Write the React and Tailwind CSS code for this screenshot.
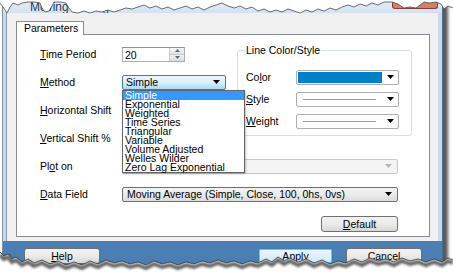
import React from "react"

const topTear = [
  [0, 3], [3, 7], [7, 13], [10, 7], [13, 3], [18, 5], [22, 3], [28, 2], [34, 2], [40, 3], [42, 8], [45, 12],
  [49, 11], [52, 6], [54, 2], [60, 2], [66, 3], [69, 8], [72, 12], [78, 13], [84, 11], [90, 13], [96, 11],
  [102, 12], [108, 10], [114, 12], [120, 10], [126, 8], [132, 9], [138, 7], [144, 5], [150, 8], [156, 6],
  [162, 9], [168, 7], [174, 10], [180, 8], [186, 6], [192, 9], [198, 7], [204, 10], [210, 7], [216, 5],
  [222, 3], [228, 6], [234, 8], [240, 6], [246, 9], [252, 7], [258, 11], [264, 9], [270, 12], [276, 10],
  [282, 12], [288, 9], [294, 11], [300, 13], [306, 10], [312, 12], [318, 9], [324, 11], [330, 8], [336, 10],
  [342, 7], [348, 5], [354, 7], [360, 4], [366, 6], [372, 3], [378, 5], [384, 2], [392, 2], [398, 4],
  [404, 8], [410, 7], [416, 8], [420, 5], [424, 2], [430, 3], [436, 2], [441, 4], [444, 9], [448, 6], [453, 8],
]

const bottomTear = [
  [0, 252], [4, 256], [8, 254], [12, 259], [16, 257], [22, 262], [28, 259], [34, 263], [42, 260], [50, 264],
  [58, 261], [66, 265], [74, 262], [82, 265], [90, 261], [98, 264], [106, 260], [114, 263], [122, 261],
  [130, 264], [138, 262], [146, 265], [154, 261], [162, 264], [170, 262], [178, 265], [186, 262], [194, 264],
  [202, 261], [210, 263], [218, 260], [226, 263], [234, 261], [242, 264], [250, 261], [258, 263], [266, 259],
  [272, 262], [278, 257], [284, 261], [290, 258], [298, 262], [306, 259], [314, 263], [322, 260], [330, 264],
  [338, 261], [346, 263], [354, 259], [362, 262], [370, 258], [378, 261], [386, 259], [394, 262], [402, 258],
  [410, 261], [418, 259], [426, 262], [434, 259], [442, 262], [448, 258], [453, 260],
]

const pts = (list, dy = 0) => list.map(([x, y]) => `${x},${y + dy}`).join(" ")

function Arrow({ color = "#000" }) {
  return (
    <svg width="7" height="4" viewBox="0 0 7 4">
      <path d="M0 0h7L3.5 4z" fill={color} />
    </svg>
  )
}

function Label({ children, width = "w-[82px]" }) {
  return <span className={`${width} shrink-0`}>{children}</span>
}

const methods = [
  "Simple",
  "Exponential",
  "Weighted",
  "Time Series",
  "Triangular",
  "Variable",
  "Volume Adjusted",
  "Welles Wilder",
  "Zero Lag Exponential",
]

export default function App() {
  return (
    <div className="relative w-[453px] h-[275px] overflow-hidden bg-white font-['Liberation_Sans',Arial,sans-serif] text-[10.5px] leading-none text-black">
      <div className="ml-[2px] w-[441px] h-full flex flex-col border-l border-[#7f93aa] border-r border-r-[#4f6d8c] bg-[#c9d9ea] shadow-[5px_1px_3px_rgba(0,0,0,0.65)]">
        {/* title bar */}
        <div className="h-[13px] flex items-start justify-between bg-gradient-to-b from-[#e6eef7] to-[#d2e1f1]">
          <span className="pl-[27px] pt-[1px] text-[12px] text-[#1e395b]">Moving Average</span>
          <span className="mr-[4px] w-[46px] h-[9px] bg-[#d47e6c] border border-t-0 border-[#8a3d32] rounded-b-[3px]" />
        </div>

        {/* dialog body */}
        <div className="ml-[3px] mr-[4px] h-[228px] flex flex-col bg-[#f0f0f0] border-l border-[#8797ab] pt-[8px] pl-[9px] pr-[8px] pb-[4px]">
          <div className="relative z-10 -mb-px w-[68px] h-[14px] flex items-center pl-[7px] bg-white border border-b-0 border-[#898c95]">
            Parameters
          </div>
          <div className="flex-1 flex flex-col bg-white border border-[#898c95]">
            <div className="flex">
              {/* left column */}
              <div className="w-[220px] pl-[23px] pt-[5px] flex flex-col">
                <div className="h-[28px] flex items-center">
                  <Label><u>T</u>ime Period</Label>
                  <div className="w-[63px] h-[15px] flex border border-[#abadb3] border-t-[#8e9199] bg-white">
                    <span className="flex-1 pl-[2px] pt-[2px]">20</span>
                    <div className="w-[15px] flex flex-col border-l border-[#c9c9c9]">
                      <span className="flex-1 flex items-center justify-center bg-gradient-to-b from-[#f6f6f6] to-[#e2e2e2] border-b border-[#c9c9c9]">
                        <svg width="5" height="3" viewBox="0 0 5 3"><path d="M0 3h5L2.5 0z" fill="#5b6d85" /></svg>
                      </span>
                      <span className="flex-1 flex items-center justify-center bg-gradient-to-b from-[#f0f0f0] to-[#dcdcdc]">
                        <svg width="5" height="3" viewBox="0 0 5 3"><path d="M0 0h5L2.5 3z" fill="#5b6d85" /></svg>
                      </span>
                    </div>
                  </div>
                </div>

                <div className="h-[28px] flex items-center">
                  <Label><u>M</u>ethod</Label>
                  <div className="relative">
                    <div className="w-[104px] h-[15px] flex items-center justify-between pl-[3px] pr-[5px] rounded-[2px] border border-[#3c7fb1] bg-gradient-to-b from-[#eaf6fd] via-[#d9f0fc] to-[#a7d9f5]">
                      <span>Simple</span>
                      <Arrow />
                    </div>
                    {/* open dropdown list */}
                    <div className="absolute left-0 top-full z-20 w-[123px] border border-[#646464] bg-white shadow-[1px_1px_2px_rgba(0,0,0,0.25)]">
                      {methods.map((m, i) => (
                        <div
                          key={m}
                          className={
                            i === 0
                              ? "h-[9px] leading-[9px] pl-[2px] bg-[#3399ff] text-white"
                              : "h-[9px] leading-[9px] pl-[2px]"
                          }
                        >
                          {m}
                        </div>
                      ))}
                    </div>
                  </div>
                </div>

                <div className="h-[28px] flex items-center">
                  <Label><u>H</u>orizontal Shift</Label>
                </div>
                <div className="h-[28px] flex items-center">
                  <Label><u>V</u>ertical Shift %</Label>
                </div>
              </div>

              {/* line color / style group */}
              <div className="relative mt-[15px] w-[175px] h-[86px] rounded-[3px] border border-[#d5dfe5] pt-[15px] pl-[8px] flex flex-col">
                <span className="absolute -top-[6px] left-[7px] bg-white px-[1px]">Line Color/Style</span>
                <div className="h-[22px] flex items-center">
                  <Label width="w-[50px]">Co<u>l</u>or</Label>
                  <div className="w-[103px] h-[15px] flex items-center justify-between pl-[1px] pr-[4px] rounded-[2px] border border-[#abadb3] bg-white">
                    <span className="w-[84px] h-[11px] bg-[#0080c8]" />
                    <Arrow />
                  </div>
                </div>
                <div className="h-[22px] flex items-center">
                  <Label width="w-[50px]"><u>S</u>tyle</Label>
                  <div className="w-[103px] h-[15px] flex items-center justify-between pl-[6px] pr-[4px] rounded-[2px] border border-[#abadb3] bg-white">
                    <span className="w-[73px] h-px bg-[#9a9a9a]" />
                    <Arrow />
                  </div>
                </div>
                <div className="h-[22px] flex items-center">
                  <Label width="w-[50px]"><u>W</u>eight</Label>
                  <div className="w-[103px] h-[15px] flex items-center justify-between pl-[6px] pr-[4px] rounded-[2px] border border-[#abadb3] bg-white">
                    <span className="w-[73px] h-px bg-[#9a9a9a]" />
                    <Arrow />
                  </div>
                </div>
              </div>
            </div>

            <div className="h-[28px] flex items-center pl-[23px]">
              <Label>Pl<u>o</u>t on</Label>
              <div className="w-[276px] h-[15px] flex items-center justify-end pr-[5px] rounded-[2px] border border-[#c5c8cc] bg-[#f4f4f4]">
                <Arrow color="#b5b5b5" />
              </div>
            </div>
            <div className="h-[28px] flex items-center pl-[23px]">
              <Label><u>D</u>ata Field</Label>
              <div className="w-[276px] h-[15px] flex items-center justify-between pl-[4px] pr-[5px] rounded-[2px] border border-[#707070] bg-gradient-to-b from-[#f3f3f3] via-[#ebebeb] to-[#dcdcdc]">
                <span>Moving Average (Simple, Close, 100, 0hs, 0vs)</span>
                <Arrow />
              </div>
            </div>

            <div className="mt-[8px] self-end mr-[31px] w-[77px] h-[16px] flex items-center justify-center rounded-[3px] border border-[#707070] bg-gradient-to-b from-[#f2f2f2] via-[#ebebeb] to-[#d6d6d6]">
              <span><u>D</u>efault</span>
            </div>
          </div>
        </div>

        {/* bottom button band */}
        <div className="flex-1 flex items-start pt-[7px] bg-[#4b7eb3]">
          <div className="ml-[21px] w-[76px] h-[16px] flex items-center justify-center rounded-[3px] border border-[#707070] bg-gradient-to-b from-[#f2f2f2] via-[#ebebeb] to-[#d6d6d6]">
            <span><u>H</u>elp</span>
          </div>
          <div className="ml-[158px] w-[75px] h-[16px] flex items-center justify-center rounded-[3px] border border-[#3c7fb1] bg-gradient-to-b from-[#eaf6fd] to-[#cfe9f8] shadow-[inset_0_0_0_1px_#48d3fb]">
            <span><u>A</u>pply</span>
          </div>
          <div className="ml-[13px] w-[76px] h-[16px] flex items-center justify-center rounded-[3px] border border-[#707070] bg-gradient-to-b from-[#f2f2f2] via-[#ebebeb] to-[#d6d6d6]">
            <span><u>C</u>ancel</span>
          </div>
        </div>
      </div>

      {/* torn paper edges */}
      <svg className="absolute inset-0 pointer-events-none" width="453" height="275" viewBox="0 0 453 275">
        <defs>
          <filter id="blur" x="-10%" y="-100%" width="120%" height="300%">
            <feGaussianBlur stdDeviation="1.3" />
          </filter>
        </defs>
        <polygon points={`0,0 453,0 ${pts([...topTear].reverse())}`} fill="#fff" />
        <polyline points={pts(topTear)} fill="none" stroke="#4a4a4a" strokeWidth="0.8" />
        <polygon points={`${pts(bottomTear)} 453,275 0,275`} fill="#fff" />
        <polyline points={pts(bottomTear, 3)} fill="none" stroke="#333" strokeWidth="4" opacity="0.75" filter="url(#blur)" />
        <polyline points={pts(bottomTear)} fill="none" stroke="#3a3a3a" strokeWidth="0.8" />
      </svg>
    </div>
  )
}
